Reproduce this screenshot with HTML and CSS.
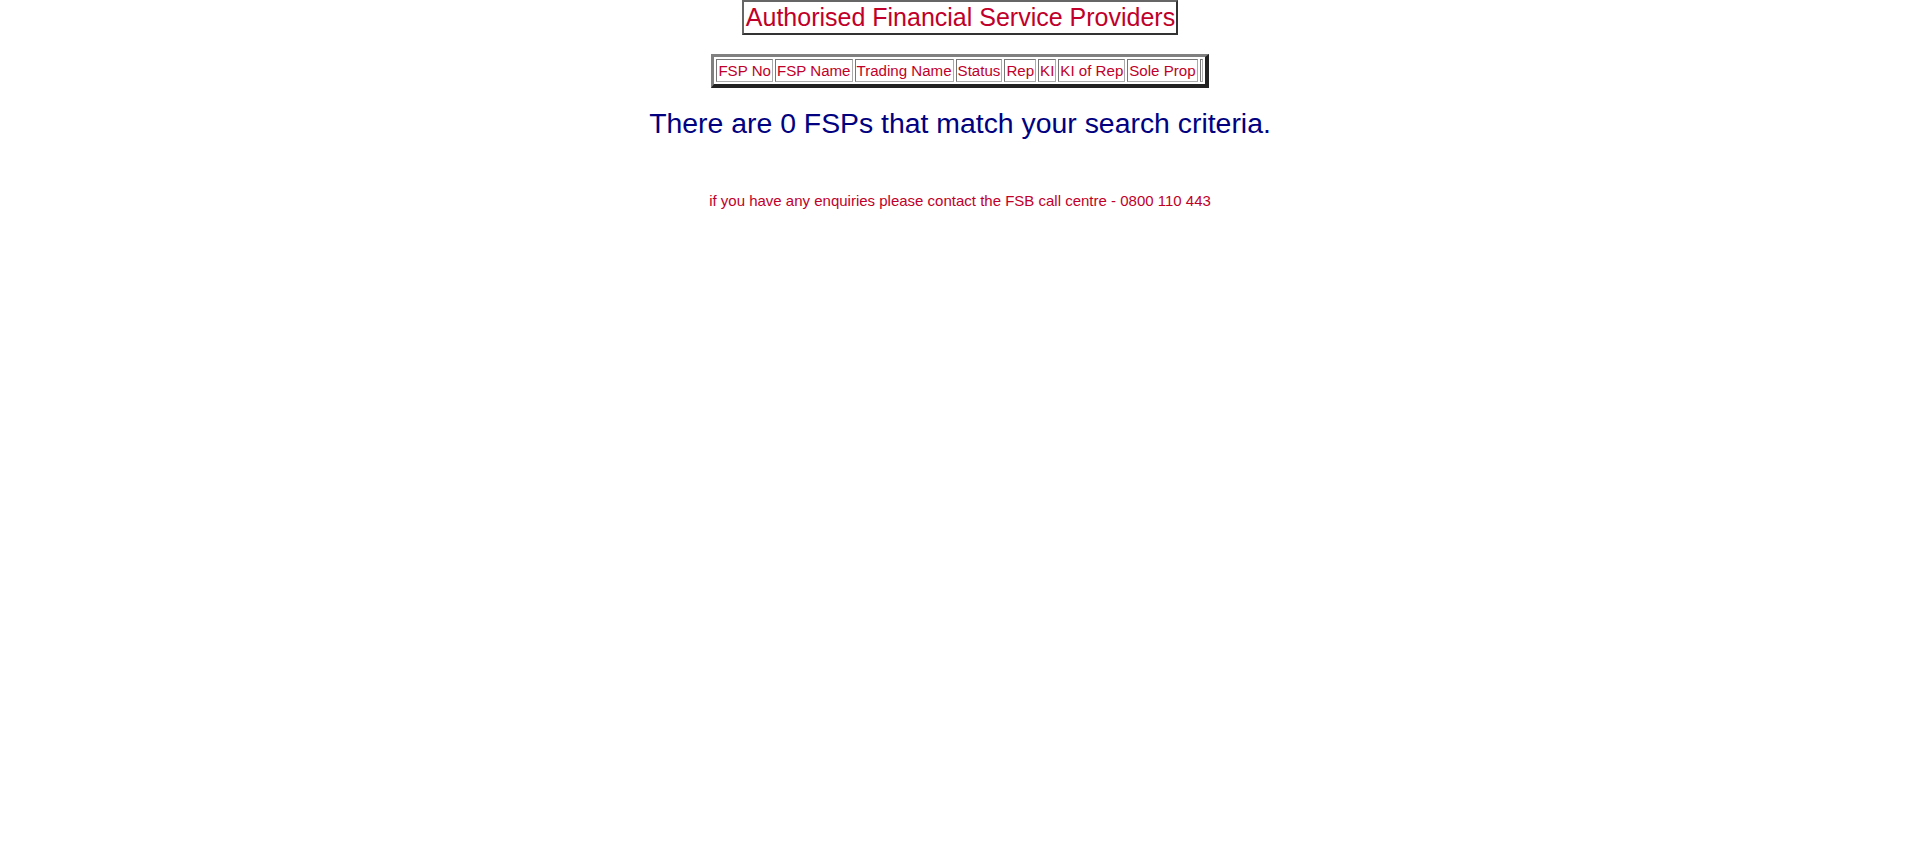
FILE: index.html
```html
<!DOCTYPE html>
<html>
<head>
<meta charset="utf-8">
<title>Authorised Financial Service Providers</title>
<link rel="stylesheet" href="styles.css">
</head>
<body>
<div class="page">
  <table class="title-box">
    <tr><td>Authorised Financial Service Providers</td></tr>
  </table>
  <table class="results">
    <tr>
      <th>FSP No</th>
      <th>FSP Name</th>
      <th>Trading Name</th>
      <th>Status</th>
      <th>Rep</th>
      <th>KI</th>
      <th>KI of Rep</th>
      <th>Sole Prop</th>
      <th class="empty"></th>
    </tr>
  </table>
  <p class="count">There are 0 FSPs that match your search criteria.</p>
  <p class="contact">if you have any enquiries please contact the FSB call centre - 0800 110 443</p>
</div>
</body>
</html>
```

FILE: styles.css
```css
html, body {
  margin: 0;
  padding: 0;
  background: #ffffff;
}

.page {
  display: flex;
  flex-direction: column;
  align-items: center;
  font-family: "Liberation Sans", Arial, sans-serif;
}

.title-box {
  border: 2px solid;
  border-color: #666 #333 #333 #666;
  border-collapse: separate;
  border-spacing: 0;
  color: #c0002a;
  font-size: 25px;
  font-weight: normal;
}

.title-box td {
  padding: 1px 1px 1px 2px;
  line-height: 29px;
}

.results {
  margin-top: 19px;
  border: 3px solid;
  border-bottom-width: 4px;
  border-right-width: 4px;
  border-color: #808080 #222 #222 #808080;
  border-collapse: separate;
  border-spacing: 2px;
  font-size: 15.1px;
}

.results th {
  font-weight: normal;
  color: #c0002a;
  border: 1px solid;
  border-color: #777 #aaa #aaa #777;
  padding: 0 1px;
  line-height: 21px;
}

.results th.empty {
  width: 1px;
  padding: 0;
}

.count {
  margin: 19px 0 0;
  color: #000080;
  font-size: 28.4px;
  line-height: 32px;
}

.contact {
  margin: 53px 0 0;
  color: #c0002a;
  font-size: 15px;
  line-height: 18px;
}
```
